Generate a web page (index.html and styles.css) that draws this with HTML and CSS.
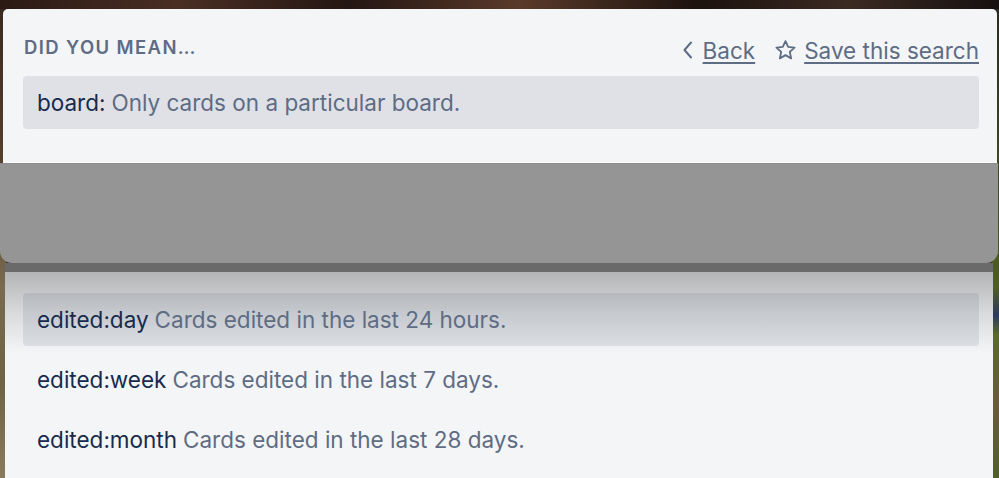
FILE: index.html
```
<!DOCTYPE html>
<html>

<head>
    <title>Search suggestions</title>
    <meta charset="utf-8">
    <link rel="stylesheet" href="styles.css">
</head>

<body>
    <div class="scene">
        <!-- top popover: did you mean -->
        <div class="search-panel">
            <div class="panel-head">
                <h3 class="panel-title">Did you mean…</h3>
                <div class="panel-links">
                    <a href="#" class="panel-link link-back">
                        <svg class="icon-back" width="12" height="18" viewBox="0 0 12 18">
                            <path d="M9 1.5 L2.5 9 L9 16.5" fill="none" stroke="#5e6c84" stroke-width="2" stroke-linecap="round" stroke-linejoin="round" />
                        </svg>
                        <span>Back</span>
                    </a>
                    <a href="#" class="panel-link link-save">
                        <svg class="icon-star" width="23" height="23" viewBox="0 0 24 24">
                            <path d="M12 2.2 L14.8 8.3 L21.5 9 L16.5 13.5 L17.9 20.2 L12 16.8 L6.1 20.2 L7.5 13.5 L2.5 9 L9.2 8.3 Z" fill="none" stroke="#5e6c84" stroke-width="1.9" stroke-linejoin="round" />
                        </svg>
                        <span>Save this search</span>
                    </a>
                </div>
            </div>
            <div class="suggest-row active">
                <span class="op">board:</span> <span class="desc">Only cards on a particular board.</span>
            </div>
        </div>

        <!-- dimmed layer over the list -->
        <div class="dim-layer"></div>

        <!-- list of operators underneath -->
        <div class="list-panel">
            <div class="suggest-row active">
                <span class="op">edited:day</span> <span class="desc">Cards edited in the last 24 hours.</span>
            </div>
            <div class="suggest-row">
                <span class="op">edited:week</span> <span class="desc">Cards edited in the last 7 days.</span>
            </div>
            <div class="suggest-row">
                <span class="op">edited:month</span> <span class="desc">Cards edited in the last 28 days.</span>
            </div>
        </div>
    </div>
</body>

</html>
```

FILE: styles.css
```
html,
body {
    margin: 0;
    height: 100%;
    overflow: hidden;
}

body {
    font-family: Inter, "Noto Sans", "Liberation Sans", sans-serif;
    background:
        linear-gradient(to right, #2a1a14 0, #4a2e24 18%, #241612 35%, #5a3a2a 52%, #1c120e 70%, #3b2a22 85%, #161010 100%) top / 100% 9px no-repeat,
        linear-gradient(to bottom, #3a2820 0, #5a4530 40%, #7a6b50 60%, #6f6244 80%, #8a7a5c 100%) left / 6px 100% no-repeat,
        linear-gradient(to bottom, #2a2a20 0, #4f5e22 60%, #2c3a60 66%, #5a6a2a 70%, #6a5a3a 85%, #50602a 100%) right / 7px 100% no-repeat,
        #3a2a20;
}

.scene {
    padding-top: 9px;
}

.search-panel {
    margin: 0 2px 0 3px;
    height: 154px;
    box-sizing: border-box;
    padding: 23px 18px 0 20px;
    background-color: #f4f5f7;
    border-radius: 5px 5px 0 0;
    border-bottom: 1px solid #fbfbfc;
}

.panel-head {
    display: flex;
    justify-content: space-between;
    align-items: center;
    height: 30px;
    margin-bottom: 14px;
}

.panel-title {
    margin: 0 0 0 1px;
    font-size: 18.5px;
    font-weight: 600;
    letter-spacing: 0.075em;
    text-transform: uppercase;
    color: #5e6c84;
}

.panel-links {
    display: flex;
    align-items: center;
    gap: 19px;
    padding-top: 6px;
}

.panel-link {
    display: flex;
    align-items: center;
    font-size: 22.5px;
    color: #5e6c84;
    text-decoration: none;
}

.link-back {
    gap: 9px;
}

.link-save {
    gap: 7px;
}

.panel-link span {
    text-decoration: underline;
    text-underline-offset: 3px;
    text-decoration-thickness: 1.5px;
}

.panel-link svg {
    display: block;
}

.suggest-row {
    height: 53px;
    box-sizing: border-box;
    padding: 0 14px;
    display: flex;
    align-items: center;
    gap: 6px;
    border-radius: 4px;
    font-size: 22.5px;
    white-space: nowrap;
}

.suggest-row.active {
    background-color: rgba(9, 30, 66, 0.09);
}

.op {
    color: #172b4d;
}

.desc {
    color: #5e6c84;
}

.dim-layer {
    height: 99px;
    margin-right: 1px;
    background-color: #959595;
    border-top: 1px solid #8c8c8c;
    border-radius: 0 0 12px 12px;
}

.list-panel {
    margin: 0 6px 0 5px;
    height: 215px;
    box-sizing: border-box;
    padding: 30px 14px 0 18px;
    background:
        linear-gradient(to bottom, #6a6a6a 0, #6a6a6a 9px, #b3b4b6 9px, #d9dadc 50px, #f4f5f7 90px);
}

.list-panel .suggest-row {
    margin-bottom: 7px;
}
```
